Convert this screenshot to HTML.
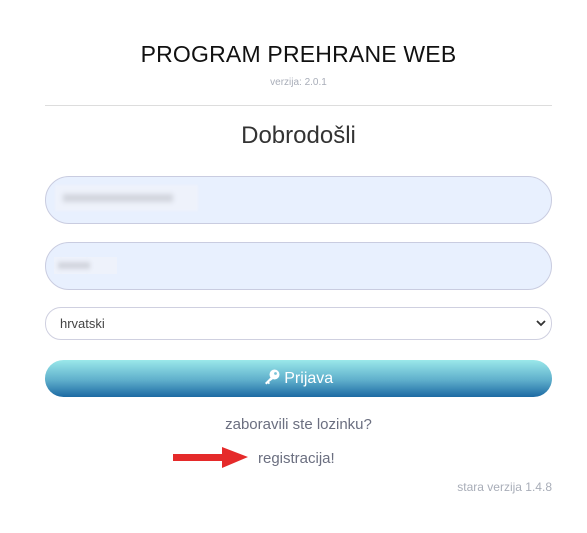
<!DOCTYPE html>
<html><head><meta charset="utf-8"><style>
body{margin:0;width:587px;height:533px;background:#fff;font-family:"Liberation Sans",sans-serif;position:relative;overflow:hidden}
.a{position:absolute}
.c{text-align:center}
</style></head><body>
<div class="a c" style="left:0;width:597px;top:41px;font-size:23px;color:#111;letter-spacing:0.2px">PROGRAM PREHRANE WEB</div>
<div class="a c" style="left:0;width:597px;top:77px;font-size:10px;color:#a8adb8">verzija: 2.0.1</div>
<div class="a" style="left:45px;width:507px;top:105px;height:1px;background:#ddd"></div>
<div class="a c" style="left:0;width:597px;top:122px;font-size:24px;color:#333">Dobrodošli</div>
<div class="a" style="left:45px;top:176px;width:505px;height:46px;border:1px solid #c9cce0;border-radius:24px;background:#e8f0fe"></div>
<div class="a" style="left:55px;top:185px;width:143px;height:26px;background:#eef2fb;filter:blur(1px)"><div style="margin:9px 8px;width:110px;height:8px;background:#d2d5de;filter:blur(2px)"></div></div>
<div class="a" style="left:45px;top:242px;width:505px;height:46px;border:1px solid #c9cce0;border-radius:24px;background:#e8f0fe"></div>
<div class="a" style="left:54px;top:257px;width:63px;height:17px;background:#eef2fb"><div style="margin:5px 4px;width:32px;height:7px;background:#d2d5de;filter:blur(2px)"></div></div>
<div class="a" style="left:45px;top:307px;width:505px;height:31px;border:1px solid #cfd0e0;border-radius:16px;background:#fff"></div>
<div class="a" style="left:60px;top:316px;font-size:13px;color:#444">hrvatski</div>
<svg class="a" style="left:535px;top:318px" width="12" height="10"><path d="M2 3l4 4 4-4" stroke="#333" stroke-width="1.8" fill="none"/></svg>
<div class="a c" style="left:45px;top:360px;width:507px;height:37px;border-radius:19px;background:linear-gradient(#9ae8ea,#5eaecb 55%,#1c6aa3);color:#fff;font-size:16px;line-height:38px">
<svg width="16" height="16" viewBox="0 0 16 16" style="vertical-align:-2px"><circle cx="10.5" cy="5.5" r="5" fill="#fff"/><circle cx="11.5" cy="4.5" r="1.4" fill="#7cc4d8"/><path d="M7 8L1 14l1.5 1.5 1.3-1.3 1 1 1.2-1.2-1-1L9 10z" fill="#fff"/></svg> Prijava</div>
<div class="a c" style="left:0;width:597px;top:416px;font-size:15px;color:#6b6f80">zaboravili ste lozinku?</div>
<div class="a" style="left:258px;top:450px;font-size:15px;color:#6b6f80">registracija!</div>
<svg class="a" style="left:172px;top:446px" width="78" height="26"><path d="M1 8L50 8 50 1 76 11 50 22 50 15 1 15z" fill="#e52a2a"/></svg>
<div class="a" style="right:35px;top:480px;font-size:12px;color:#a8adb8">stara verzija 1.4.8</div>
</body></html>
